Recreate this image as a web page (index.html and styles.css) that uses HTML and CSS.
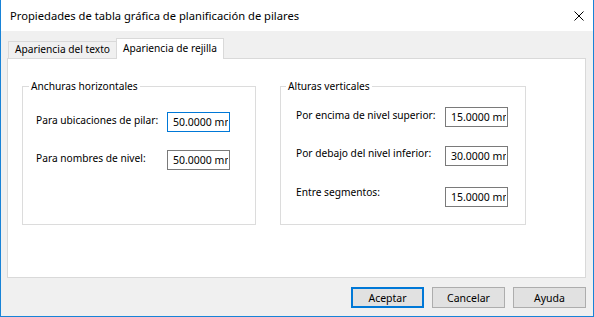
FILE: index.html
```html
<!DOCTYPE html>
<html lang="es">
<head>
    <meta charset="UTF-8">
    <meta name="viewport" content="width=device-width, initial-scale=1.0">
    <title>Propiedades de tabla gráfica de planificación de pilares</title>
    <link rel="stylesheet" href="styles.css">
</head>
<body>
    <div class="window">
        <div class="titlebar">
            <span class="title">Propiedades de tabla gráfica de planificación de pilares</span>
            <button class="close-btn" aria-label="Cerrar">
                <svg width="10" height="10" viewBox="0 0 10 10">
                    <path d="M0.5 0.5 L9.5 9.5 M9.5 0.5 L0.5 9.5" stroke="#000" stroke-width="1" fill="none"/>
                </svg>
            </button>
        </div>

        <div class="content">
            <div class="tabs">
                <div class="tab">Apariencia del texto</div>
                <div class="tab tab--active">Apariencia de rejilla</div>
            </div>

            <div class="panel">
                <fieldset class="group group--left">
                    <legend>Anchuras horizontales</legend>
                    <div class="field">
                        <label for="pilar">Para ubicaciones de pilar:</label>
                        <input type="text" id="pilar" class="input input--focus" value="50.0000 mm" readonly>
                    </div>
                    <div class="field">
                        <label for="nombres">Para nombres de nivel:</label>
                        <input type="text" id="nombres" class="input" value="50.0000 mm" readonly>
                    </div>
                </fieldset>

                <fieldset class="group group--right">
                    <legend>Alturas verticales</legend>
                    <div class="field">
                        <label for="encima">Por encima de nivel superior:</label>
                        <input type="text" id="encima" class="input" value="15.0000 mm" readonly>
                    </div>
                    <div class="field field--mid">
                        <label for="debajo">Por debajo del nivel inferior:</label>
                        <input type="text" id="debajo" class="input" value="30.0000 mm" readonly>
                    </div>
                    <div class="field field--last">
                        <label for="entre">Entre segmentos:</label>
                        <input type="text" id="entre" class="input" value="15.0000 mm" readonly>
                    </div>
                </fieldset>
            </div>

            <div class="actions">
                <button class="btn btn--default">Aceptar</button>
                <button class="btn">Cancelar</button>
                <button class="btn">Ayuda</button>
            </div>
        </div>
    </div>
</body>
</html>
```

FILE: styles.css
```css
:root {
    --accent: #0078d7;
    --frame: #1883d7;
    --face: #f0f0f0;
    --line: #d9d9d9;
    --group-line: #dcdcdc;
    --text: #000000;
}

* {
    box-sizing: border-box;
}

body {
    margin: 0;
    font-family: "Segoe UI", "Noto Sans", sans-serif;
    font-size: 10.2px;
    color: var(--text);
    background: var(--face);
}

.window {
    width: 594px;
    height: 317px;
    border: 1px solid var(--frame);
    border-top: none;
    background: var(--face);
    display: flex;
    flex-direction: column;
}

/* title bar */
.titlebar {
    height: 31px;
    background: #ffffff;
    display: flex;
    align-items: center;
    justify-content: space-between;
    padding-left: 9px;
}

.title {
    font-size: 11.2px;
    line-height: 31px;
}

.close-btn {
    width: 30px;
    height: 31px;
    border: none;
    background: transparent;
    padding: 0;
    display: flex;
    align-items: center;
    justify-content: center;
    margin-right: -1px;
}

/* tabs + page */
.content {
    flex: 1;
    padding: 7px 6px 0 6px;
    display: flex;
    flex-direction: column;
}

.tabs {
    display: flex;
    align-items: flex-end;
    height: 20px;
    padding-left: 1px;
    position: relative;
    z-index: 1;
}

.tab {
    width: 109px;
    height: 17px;
    border: 1px solid var(--line);
    border-bottom: none;
    background: var(--face);
    padding-left: 6px;
    line-height: 15px;
    white-space: nowrap;
}

.tab--active {
    width: 108px;
    height: 21px;
    margin-left: -1px;
    margin-bottom: -1px;
    background: #ffffff;
    line-height: 18px;
}

.panel {
    width: 579px;
    height: 220px;
    background: #ffffff;
    border: 1px solid var(--line);
    padding: 19px 0 0 14px;
    display: flex;
    align-items: flex-start;
    gap: 24px;
}

/* group boxes */
.group {
    margin: 0;
    height: 147px;
    border: 1px solid var(--group-line);
    padding: 0;
    display: flex;
    flex-direction: column;
}

.group legend {
    margin-left: 6px;
    padding: 0 2px;
    line-height: 16px;
}

.group--left {
    width: 234px;
    padding-top: 18px;
    gap: 18px;
}

.group--right {
    width: 246px;
    padding-top: 13px;
    gap: 19px;
}

.group--right legend {
    margin-left: 5px;
}

.field {
    display: flex;
    align-items: flex-start;
}

.group--left .field {
    padding-left: 13px;
}

.group--right .field {
    padding-left: 15px;
}

.field label {
    line-height: 16px;
    white-space: nowrap;
}

.group--left .field label {
    width: 131px;
}

.group--right .field label {
    width: 149px;
}

.field--mid label {
    margin-top: -1px;
}

.field--last {
    margin-top: 2px;
}

.field--last label {
    margin-top: -3px;
}

.input {
    width: 63px;
    height: 20px;
    border: 1px solid #7a7a7a;
    padding: 0 1px 0 5px;
    font-family: inherit;
    font-size: 10.5px;
    color: var(--text);
    background: #ffffff;
    outline: none;
}

.input--focus {
    border-color: var(--accent);
}

/* dialog buttons */
.actions {
    display: flex;
    justify-content: flex-end;
    gap: 8px;
    padding: 9px 1px 0 0;
}

.btn {
    width: 73px;
    height: 21px;
    padding: 0;
    border: 1px solid #adadad;
    background: #e1e1e1;
    font-family: inherit;
    font-size: 10.5px;
    color: var(--text);
}

.btn--default {
    border: 2px solid var(--accent);
}
```
